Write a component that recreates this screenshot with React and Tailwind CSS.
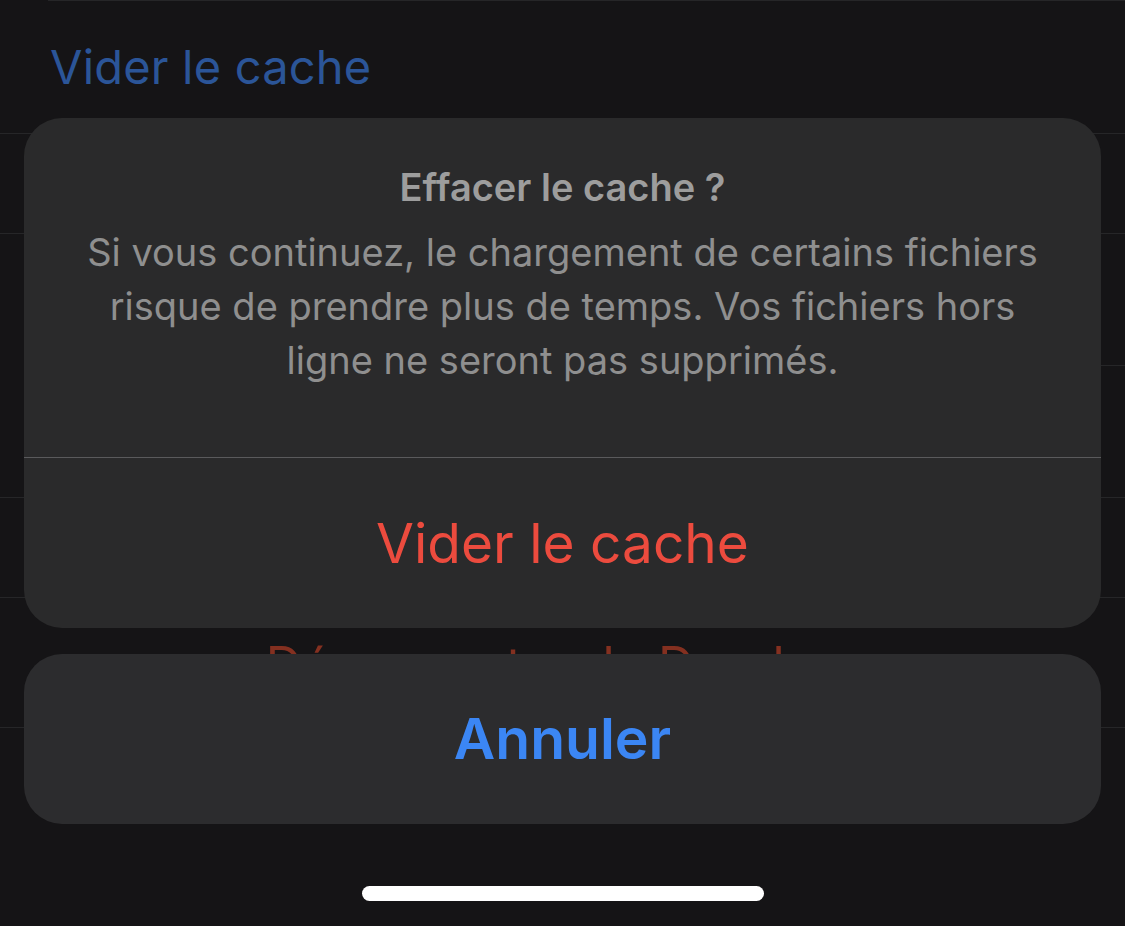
export default function App() {
  const font = { fontFamily: 'Inter, "Noto Sans", sans-serif' };

  return (
    <div className="relative w-[1125px] h-[926px] overflow-hidden bg-[#151416]" style={font}>
      {/* settings list behind the sheet */}
      <div className="flex flex-col">
        <div className="ml-12 h-px bg-[#262628]" />
        <div className="h-[132px] flex items-center pl-[50px]">
          <span className="text-[47px] text-[#2b5598] tracking-[0.2px]">Vider le cache</span>
        </div>
        <div className="h-px bg-[#262628]" />
        <div className="h-[99px]" />
        <div className="h-px bg-[#262628]" />
        <div className="h-[131px]" />
        <div className="ml-12 h-px bg-[#262628]" />
        <div className="h-[131px]" />
        <div className="h-px bg-[#262628]" />
        <div className="h-[99px]" />
        <div className="h-px bg-[#262628]" />
        <div className="h-[129px] flex items-center justify-center pt-1">
          <span className="text-[50px] leading-none text-[#843020]">Déconnecter de Dropbox</span>
        </div>
        <div className="h-px bg-[#262628]" />
      </div>

      {/* action sheet overlay */}
      <div className="absolute left-6 right-6 top-[118px] flex flex-col gap-[26px]">
        <div className="rounded-[38px] bg-[#2a2a2b] overflow-hidden">
          <div className="h-[339px] flex flex-col items-center pt-[42px] px-10 text-center">
            <div className="text-[38px] leading-[54px] font-semibold text-[#9d9d9d]">Effacer le cache ?</div>
            <p className="mt-[11px] text-[38px] leading-[54px] text-[#8f8f8f]">
              Si vous continuez, le chargement de certains fichiers
              <br />
              risque de prendre plus de temps. Vos fichiers hors
              <br />
              ligne ne seront pas supprimés.
            </p>
          </div>
          <div className="h-px bg-[#5a5a5c]" />
          <button className="w-full h-[170px] flex items-center justify-center text-[55px] text-[#ec4b3e]">
            Vider le cache
          </button>
        </div>
        <button className="h-[170px] rounded-[38px] bg-[#2c2c2e] flex items-center justify-center text-[57px] font-semibold text-[#3b86f4]">
          Annuler
        </button>
      </div>

      {/* home indicator */}
      <div className="absolute left-[362px] top-[886px] w-[402px] h-[15px] rounded-full bg-white" />
    </div>
  );
}
